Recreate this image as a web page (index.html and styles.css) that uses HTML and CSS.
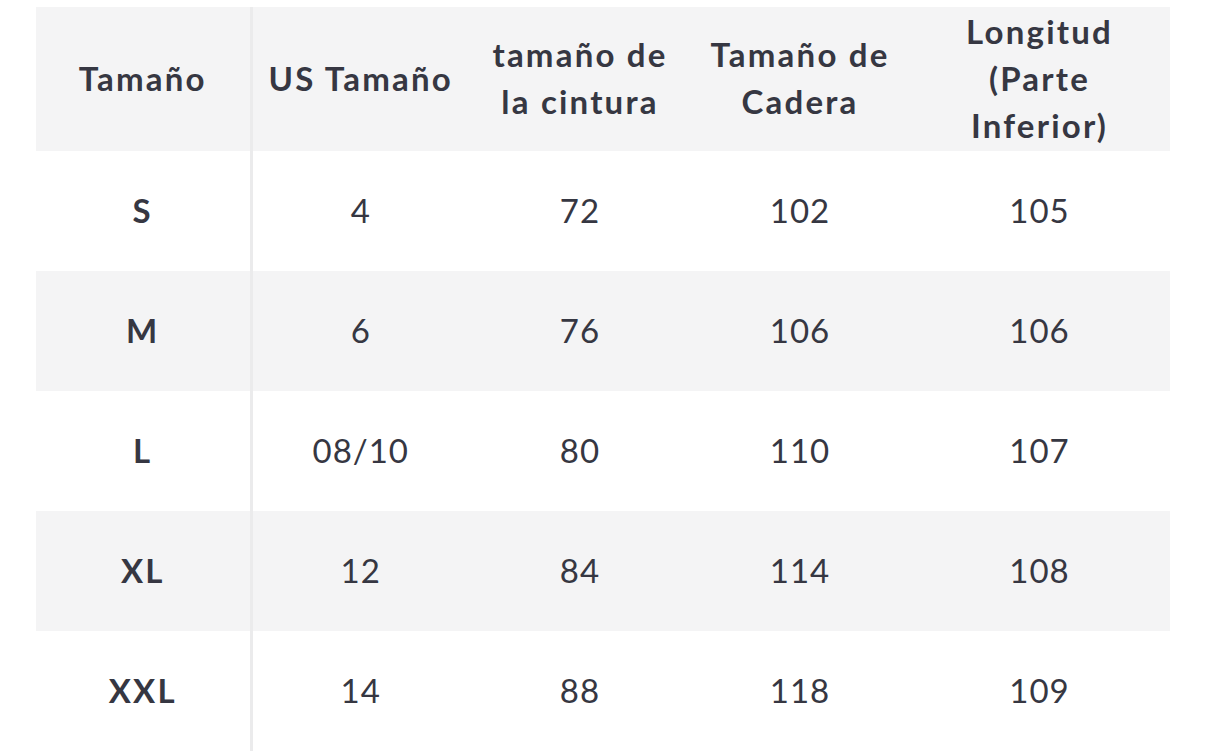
FILE: index.html
```html
<!DOCTYPE html>
<html lang="es">
<head>
<meta charset="utf-8">
<title>Tabla de tallas</title>
<link rel="stylesheet" href="styles.css">
</head>
<body>
<table class="size-table">
  <colgroup>
    <col class="c1"><col class="c2"><col class="c3"><col class="c4"><col class="c5">
  </colgroup>
  <thead>
    <tr>
      <th class="first">Tamaño</th>
      <th>US Tamaño</th>
      <th>tamaño de<br>la cintura</th>
      <th>Tamaño de<br>Cadera</th>
      <th>Longitud<br>(Parte<br>Inferior)</th>
    </tr>
  </thead>
  <tbody>
    <tr><td class="first">S</td><td>4</td><td>72</td><td>102</td><td>105</td></tr>
    <tr class="alt"><td class="first">M</td><td>6</td><td>76</td><td>106</td><td>106</td></tr>
    <tr><td class="first">L</td><td>08/10</td><td>80</td><td>110</td><td>107</td></tr>
    <tr class="alt"><td class="first">XL</td><td>12</td><td>84</td><td>114</td><td>108</td></tr>
    <tr><td class="first">XXL</td><td>14</td><td>88</td><td>118</td><td>109</td></tr>
  </tbody>
</table>
</body>
</html>
```

FILE: styles.css
```css
html, body {
  margin: 0;
  padding: 0;
  background: #ffffff;
}
body {
  padding: 7px 36px 0 36px;
  font-family: Lato, "Noto Sans", sans-serif;
  color: #363742;
}
.size-table {
  border-collapse: collapse;
  table-layout: fixed;
  width: 1134px;
}
.c1 { width: 215px; }
.c2 { width: 218px; }
.c3 { width: 222px; }
.c4 { width: 218px; }
.c5 { width: 261px; }
.size-table th,
.size-table td {
  padding: 0;
  text-align: center;
  vertical-align: middle;
}
.size-table thead tr {
  height: 144px;
  background: #f4f4f5;
}
.size-table th {
  font-size: 33px;
  font-weight: 700;
  line-height: 47px;
  letter-spacing: 2.2px;
  padding-bottom: 2px;
}
.size-table tbody tr {
  height: 120px;
}
.size-table tbody tr.alt {
  background: #f4f4f5;
}
.size-table td {
  font-size: 33px;
  font-weight: 400;
  letter-spacing: 1px;
  padding-bottom: 3px;
}
.size-table td.first {
  font-weight: 700;
  letter-spacing: 2.2px;
}
.size-table .first {
  border-right: 3px solid #ebebec;
}
```
